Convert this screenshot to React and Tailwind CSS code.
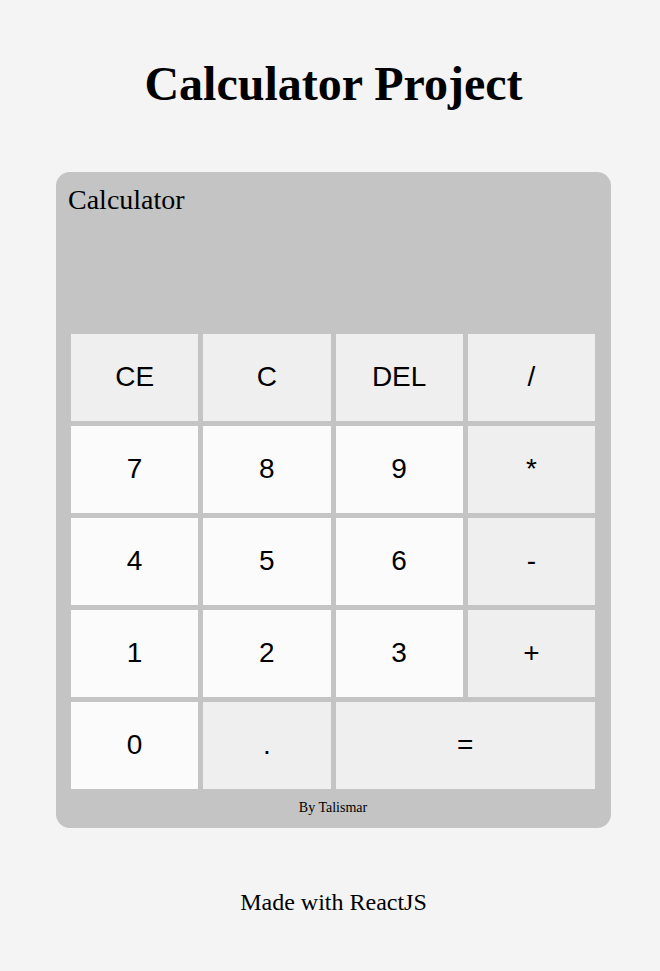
import React from "react";

const keys = [
  ["CE", "op"], ["C", "op"], ["DEL", "op"], ["/", "op"],
  ["7", "d"], ["8", "d"], ["9", "d"], ["*", "op"],
  ["4", "d"], ["5", "d"], ["6", "d"], ["-", "op"],
  ["1", "d"], ["2", "d"], ["3", "d"], ["+", "op"],
  ["0", "d"], [".", "op"], ["=", "op2"],
];

export default function App() {
  return (
    <div className="min-h-[971px] w-full bg-[#f4f4f4] text-black">
      <div className="ml-[56px] w-[555px] pt-[55px]">
        <h1 className="text-center text-[48px] font-bold leading-[58px] font-['Liberation_Serif',serif]">
          Calculator Project
        </h1>
        <div className="mt-[59px] rounded-[14px] bg-[#c4c4c4] pl-[15px] pr-[16px]">
          <div className="h-[162px] pt-[12px] -ml-[3px] text-[28px] leading-[32px] font-['Liberation_Serif',serif]">
            Calculator
          </div>
          <div className="grid grid-cols-4 gap-x-[5px] gap-y-[5px]">
            {keys.map(([k, t]) => (
              <button
                key={k}
                className={
                  "h-[87px] pb-[2px] flex items-center justify-center text-[28px] font-['Liberation_Sans',Arial,sans-serif] text-black " +
                  (t === "d" ? "bg-[#fbfbfb]" : "bg-[#efefef]") +
                  (t === "op2" ? " col-span-2" : "")
                }
              >
                {k}
              </button>
            ))}
          </div>
          <div className="h-[39px] pb-[2px] flex items-center justify-center text-[14px] font-['Liberation_Serif',serif]">
            By Talismar
          </div>
        </div>
        <div className="mt-[60px] text-center text-[24px] leading-[28px] font-['Liberation_Serif',serif]">
          Made with ReactJS
        </div>
      </div>
    </div>
  );
}
